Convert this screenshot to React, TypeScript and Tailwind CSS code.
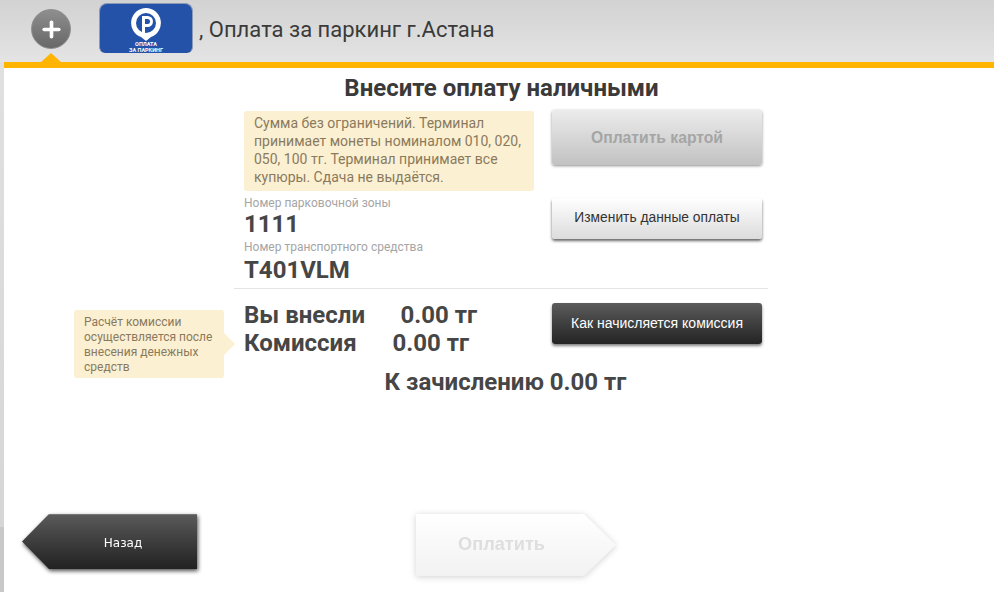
import { Plus } from 'lucide-react';

export default function App() {
  return (
    <div className="relative flex h-[598px] w-[994px] flex-col overflow-hidden bg-white font-['Roboto',sans-serif] text-[#3c3c3c]">
      {/* Header */}
      <header className="flex h-[62px] items-start bg-gradient-to-b from-[#d2d2d2] to-[#e4e4e4]">
        <div className="relative ml-[31px] mt-[9px] flex h-10 w-10 items-center justify-center rounded-full border border-[#8f8f8f] bg-gradient-to-b from-[#8e8e8e] to-[#686868]">
          <Plus size={25} strokeWidth={3.5} className="text-white" />
          <div className="absolute left-[9px] top-[43px] h-0 w-0 border-x-[10px] border-b-[9px] border-x-transparent border-b-[#ffb400]" />
        </div>
        <div className="ml-[28px] mt-[3px] flex h-[50px] w-[94px] flex-col items-center overflow-hidden rounded-t-lg rounded-b-[6px] border border-b-0 border-[#8c9ab8] bg-[#2352a8]">
          <svg width="32" height="33" viewBox="0 0 32 33" className="mt-[4px] shrink-0">
            <path d="M16 0a15 15 0 0 1 5 29.1L16 33l-5-3.9A15 15 0 0 1 16 0z" fill="#fff" />
            <circle cx="16" cy="15" r="10" fill="#2352a8" />
            <path d="M12 25V8h5.5a5.5 5.5 0 0 1 0 11H15v6z" fill="#fff" />
            <path d="M15 11h2.5a2.5 2.5 0 0 1 0 5H15z" fill="#2352a8" />
          </svg>
          <span className="whitespace-nowrap text-center text-[5.5px] font-bold leading-[6px] text-white">
            ОПЛАТА
            <br />
            ЗА ПАРКИНГ
          </span>
        </div>
        <span className="ml-[6px] mt-[16px] text-[22px] leading-[28px] text-[#3a3a3a]">, Оплата за паркинг г.Астана</span>
      </header>

      {/* Content */}
      <main className="ml-1 flex flex-1 flex-col border-t-[6px] border-[#ffb400] bg-white">
        <h1 className="ml-[5px] mt-[6px] text-center text-[24px] font-bold leading-[28px] text-[#3a3a3a]">Внесите оплату наличными</h1>

        <div className="relative ml-[230px] mt-[7px] w-[534px]">
          <div className="flex justify-between border-b border-[#e4e4e4] pb-[2px] pl-[10px] pr-[6px]">
            <div className="w-[290px]">
              <div className="mt-[2px] h-[80px] rounded-[3px] bg-[#fcf0d2] px-[10px] pt-[3px] text-[14px] leading-[18px] text-[#8a7a5c]">
                Сумма без ограничений. Терминал принимает монеты номиналом 010, 020, 050, 100 тг. Терминал принимает все купюры. Сдача не выдаётся.
              </div>
              <div className="mt-[5px] text-[12px] leading-[14px] text-[#a5a5a5]">Номер парковочной зоны</div>
              <div className="mb-[2px] text-[24px] font-bold leading-[28px] text-[#464646]">1111</div>
              <div className="text-[12px] leading-[14px] text-[#a5a5a5]">Номер транспортного средства</div>
              <div className="text-[24px] font-bold leading-[32px] text-[#464646]">T401VLM</div>
            </div>
            <div className="flex w-[210px] flex-col">
              <button className="mt-[1px] h-[55px] rounded-[3px] bg-gradient-to-b from-[#ececec] to-[#c2c2c2] font-['Liberation_Sans',sans-serif] text-[15.7px] font-bold text-[#a5a5a5] shadow-[0_1px_3px_rgba(0,0,0,0.45)]">
                Оплатить картой
              </button>
              <button className="mt-[33px] h-[41px] rounded-[3px] bg-gradient-to-b from-[#ffffff] to-[#dcdcdc] font-['Liberation_Sans',sans-serif] text-[13.8px] text-[#333] shadow-[0_2px_3px_rgba(0,0,0,0.6)]">
                Изменить данные оплаты
              </button>
            </div>
          </div>

          <div className="flex justify-between pl-[10px] pr-[6px]">
            <div className="mt-[12px] text-[24px] font-bold leading-[28px] text-[#464646]">
              <div className="flex">
                <span className="w-[156.5px]">Вы внесли</span>
                <span>0.00 тг</span>
              </div>
              <div className="flex">
                <span className="w-[148.5px]">Комиссия</span>
                <span>0.00 тг</span>
              </div>
            </div>
            <button className="mt-[14px] h-[41px] w-[210px] rounded-[3px] bg-gradient-to-b from-[#5c5c5c] to-[#242424] font-['Liberation_Sans',sans-serif] text-[14px] text-white shadow-[0_2px_3px_rgba(0,0,0,0.5)]">
              Как начисляется комиссия
            </button>
          </div>

          <div className="ml-[9px] mt-[11px] text-center text-[24px] font-bold leading-[29px] text-[#464646]">К зачислению 0.00 тг</div>

          {/* Tooltip */}
          <div className="absolute left-[-160px] top-[201px] h-[68px] w-[150px] rounded-[3px] bg-[#fcf0d2] px-[10px] pt-[5px] text-[12px] leading-[15px] text-[#8a7a5c]">
            Расчёт комиссии осуществляется после внесения денежных средств
            <div className="absolute left-[150px] top-[23px] h-0 w-0 border-y-[11px] border-l-[11px] border-y-transparent border-l-[#fcf0d2]" />
          </div>
        </div>

        {/* Bottom nav */}
        <div className="mb-[22px] mt-auto flex items-start">
          <div className="ml-[18px] drop-shadow-[1px_2px_2px_rgba(0,0,0,0.7)]">
            <button className="flex h-[55px] w-[175px] items-center justify-center border-t border-[#777] bg-gradient-to-b from-[#5a5a5a] to-[#222] pl-[27px] pt-[2px] font-['DejaVu_Sans',sans-serif] text-[12px] text-white [clip-path:polygon(0_50%,27px_0,100%_0,100%_100%,27px_100%)]">
              Назад
            </button>
          </div>
          <div className="ml-[219px] drop-shadow-[0_1px_3px_rgba(0,0,0,0.18)]">
            <button className="flex h-[62px] w-[200px] items-center bg-gradient-to-b from-[#ffffff] to-[#f2f2f2] pl-[42px] font-['Liberation_Sans',sans-serif] text-[18.2px] font-bold text-[#dedede] [clip-path:polygon(0_0,168px_0,100%_50%,168px_100%,0_100%)]">
              Оплатить
            </button>
          </div>
        </div>
      </main>

      {/* Page background showing along the left edge */}
      <div className="absolute left-0 top-[62px] h-[465px] w-1 bg-gradient-to-b from-[#e0e0e0] to-[#d6d6d6]" />
      <div className="absolute bottom-[6px] left-0 h-[65px] w-1 bg-[#c8c8c8]" />
    </div>
  );
}
